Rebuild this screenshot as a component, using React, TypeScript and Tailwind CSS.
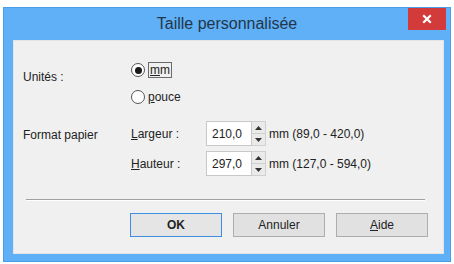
import React from "react";

const font = { fontFamily: '"Liberation Sans", Arial, sans-serif' };

function Spinner() {
  return (
    <div className="flex flex-col w-[14px] h-[25px] border border-[#d0d0d0] border-l-0 bg-[#eaeaea]">
      <div className="flex-1 flex items-center justify-center border-b border-[#d0d0d0]">
        <svg width="7" height="4" viewBox="0 0 7 4"><path d="M0 4 L3.5 0 L7 4 Z" fill="#333" /></svg>
      </div>
      <div className="flex-1 flex items-center justify-center">
        <svg width="7" height="4" viewBox="0 0 7 4"><path d="M0 0 L3.5 4 L7 0 Z" fill="#333" /></svg>
      </div>
    </div>
  );
}

function SizeRow({ label, value, range }: { label: React.ReactNode; value: string; range: string }) {
  return (
    <div className="flex items-center h-[25px]">
      <div className="w-[75px] text-[12px] text-[#222]">{label}</div>
      <div className="flex items-center">
        <div className="w-[46px] h-[25px] bg-white border border-[#c8c8c8] flex items-center pl-[5px] text-[12px] text-[#222]">
          {value}
        </div>
        <Spinner />
      </div>
      <div className="ml-[3px] text-[12px] text-[#222]">{range}</div>
    </div>
  );
}

function Radio({ checked }: { checked?: boolean }) {
  return (
    <div className="w-[14px] h-[14px] rounded-full border border-[#555] bg-white flex items-center justify-center">
      {checked && <div className="w-[7px] h-[7px] rounded-full bg-[#1a1a1a]" />}
    </div>
  );
}

export default function App() {
  return (
    <div className="w-[454px] h-[264px] bg-white pt-[7px] pl-[3px]" style={font}>
      <div className="w-[448px] h-[255px] bg-[#5fb0f6] border border-[#4a9ee8] flex flex-col">
        {/* title bar */}
        <div className="relative h-[32px] flex items-center justify-center">
          <span className="text-[16px] text-[#23364a]">Taille personnalisée</span>
          <div className="absolute right-[4px] top-0 w-[38px] h-[22px] bg-[#d33b3b] flex items-center justify-center">
            <svg width="10" height="10" viewBox="0 0 10 10">
              <path d="M2 2 L8 8 M8 2 L2 8" stroke="#fff" strokeWidth="2.2" strokeLinecap="square" />
            </svg>
          </div>
        </div>
        {/* client */}
        <div className="ml-[9px] mr-[6px] h-[214px] bg-[#f0f0f0] border border-[#e4e4e4] pt-[20px]">
          <div className="flex pl-[9px]">
            <div className="w-[108px] text-[12px] text-[#222] pt-[7px]">Unités :</div>
            <div className="flex flex-col gap-[9px]">
              <div className="flex items-center gap-[3px] h-[18px]">
                <Radio checked />
                <span className="text-[12px] text-[#222] border border-[#6a6a6a] px-[1px] leading-[14px]">
                  <span className="underline">m</span>m
                </span>
              </div>
              <div className="flex items-center gap-[3px] h-[18px]">
                <Radio />
                <span className="text-[12px] text-[#222]">
                  <span className="underline">p</span>ouce
                </span>
              </div>
            </div>
          </div>
          <div className="flex pl-[9px] mt-[15px]">
            <div className="w-[108px] text-[12px] text-[#222] pt-[5px]">Format papier</div>
            <div className="flex flex-col gap-[5px]">
              <SizeRow label={<><span className="underline">L</span>argeur :</>} value="210,0" range="mm (89,0 - 420,0)" />
              <SizeRow label={<><span className="underline">H</span>auteur :</>} value="297,0" range="mm (127,0 - 594,0)" />
            </div>
          </div>
          <div className="ml-[12px] mr-[18px] mt-[23px] h-[2px] border-t border-[#a0a0a0] border-b border-b-white" />
          <div className="flex justify-end gap-[11px] pr-[15px] mt-[12px]">
            <button className="w-[92px] h-[24px] bg-[#e5e5e5] border border-[#3c8fe0] text-[12px] font-bold text-[#222]">OK</button>
            <button className="w-[92px] h-[24px] bg-[#e1e1e1] border border-[#adadad] text-[12px] text-[#222]">Annuler</button>
            <button className="w-[92px] h-[24px] bg-[#e1e1e1] border border-[#adadad] text-[12px] text-[#222]">
              <span className="underline">A</span>ide
            </button>
          </div>
        </div>
      </div>
    </div>
  );
}
